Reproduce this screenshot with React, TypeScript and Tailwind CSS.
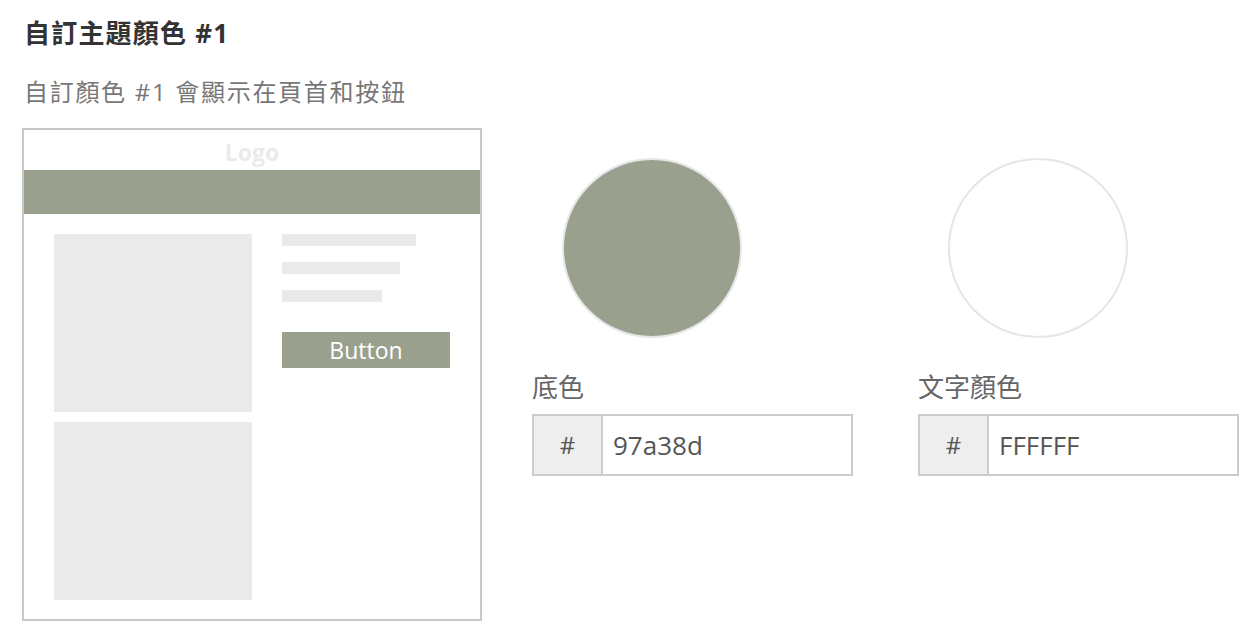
const SAGE = "#99a18e";

function ColorField({
  label,
  value,
  fill,
}: {
  label: string;
  value: string;
  fill: string;
}) {
  return (
    <div className="flex w-[386px] flex-col">
      <div
        className="ml-[30px] mt-[30px] h-[180px] w-[180px] rounded-full border-2 border-[#e6e6e6]"
        style={{ backgroundColor: fill }}
      />
      <p className="mt-[34px] text-[26px] leading-[30px] text-[#666]">{label}</p>
      <div className="mt-[12px] flex h-[62px] w-[321px] border-2 border-[#cccccc]">
        <div className="flex w-[69px] items-center justify-center border-r-2 border-[#cccccc] bg-[#eeeeee] text-[24px] text-[#555]">
          #
        </div>
        <div className="flex flex-1 items-center pl-[10px] text-[26px] text-[#555]">
          {value}
        </div>
      </div>
    </div>
  );
}

export default function App() {
  return (
    <main
      className="min-h-screen bg-white pl-[22px] pt-[17px]"
      style={{ fontFamily: '"Open Sans", "Noto Sans CJK TC", sans-serif' }}
    >
      <h1 className="pl-[2px] text-[26px] font-bold leading-[32px] tracking-[1.2px] text-[#333]">
        自訂主題顏色 #1
      </h1>
      <p className="mt-[27px] pl-[2px] text-[24px] leading-[32px] tracking-[1.7px] text-[#777]">
        自訂顏色 #1 會顯示在頁首和按鈕
      </p>

      <div className="mt-[20px] flex gap-[50px]">
        {/* Preview mock-up */}
        <div className="flex h-[493px] w-[460px] flex-col border-2 border-[#c8c8c8]">
          <div className="flex h-[40px] items-center justify-center pt-[4px] text-[23px] font-bold text-[#ebebeb]">
            Logo
          </div>
          <div className="h-[44px]" style={{ backgroundColor: SAGE }} />
          <div className="flex gap-[30px] px-[30px] pt-[20px]">
            <div className="flex w-[198px] flex-col gap-[10px]">
              <div className="h-[178px] bg-[#eaeaea]" />
              <div className="h-[178px] bg-[#eaeaea]" />
            </div>
            <div className="flex flex-col">
              <div className="h-[12px] w-[134px] bg-[#eaeaea]" />
              <div className="mt-[16px] h-[12px] w-[118px] bg-[#eaeaea]" />
              <div className="mt-[16px] h-[12px] w-[100px] bg-[#eaeaea]" />
              <div
                className="mt-[30px] flex h-[36px] w-[168px] items-center justify-center text-[23px] text-white"
                style={{ backgroundColor: SAGE }}
              >
                Button
              </div>
            </div>
          </div>
        </div>

        <div className="flex">
          <ColorField label="底色" value="97a38d" fill={SAGE} />
          <ColorField label="文字顏色" value="FFFFFF" fill="#ffffff" />
        </div>
      </div>
    </main>
  );
}
